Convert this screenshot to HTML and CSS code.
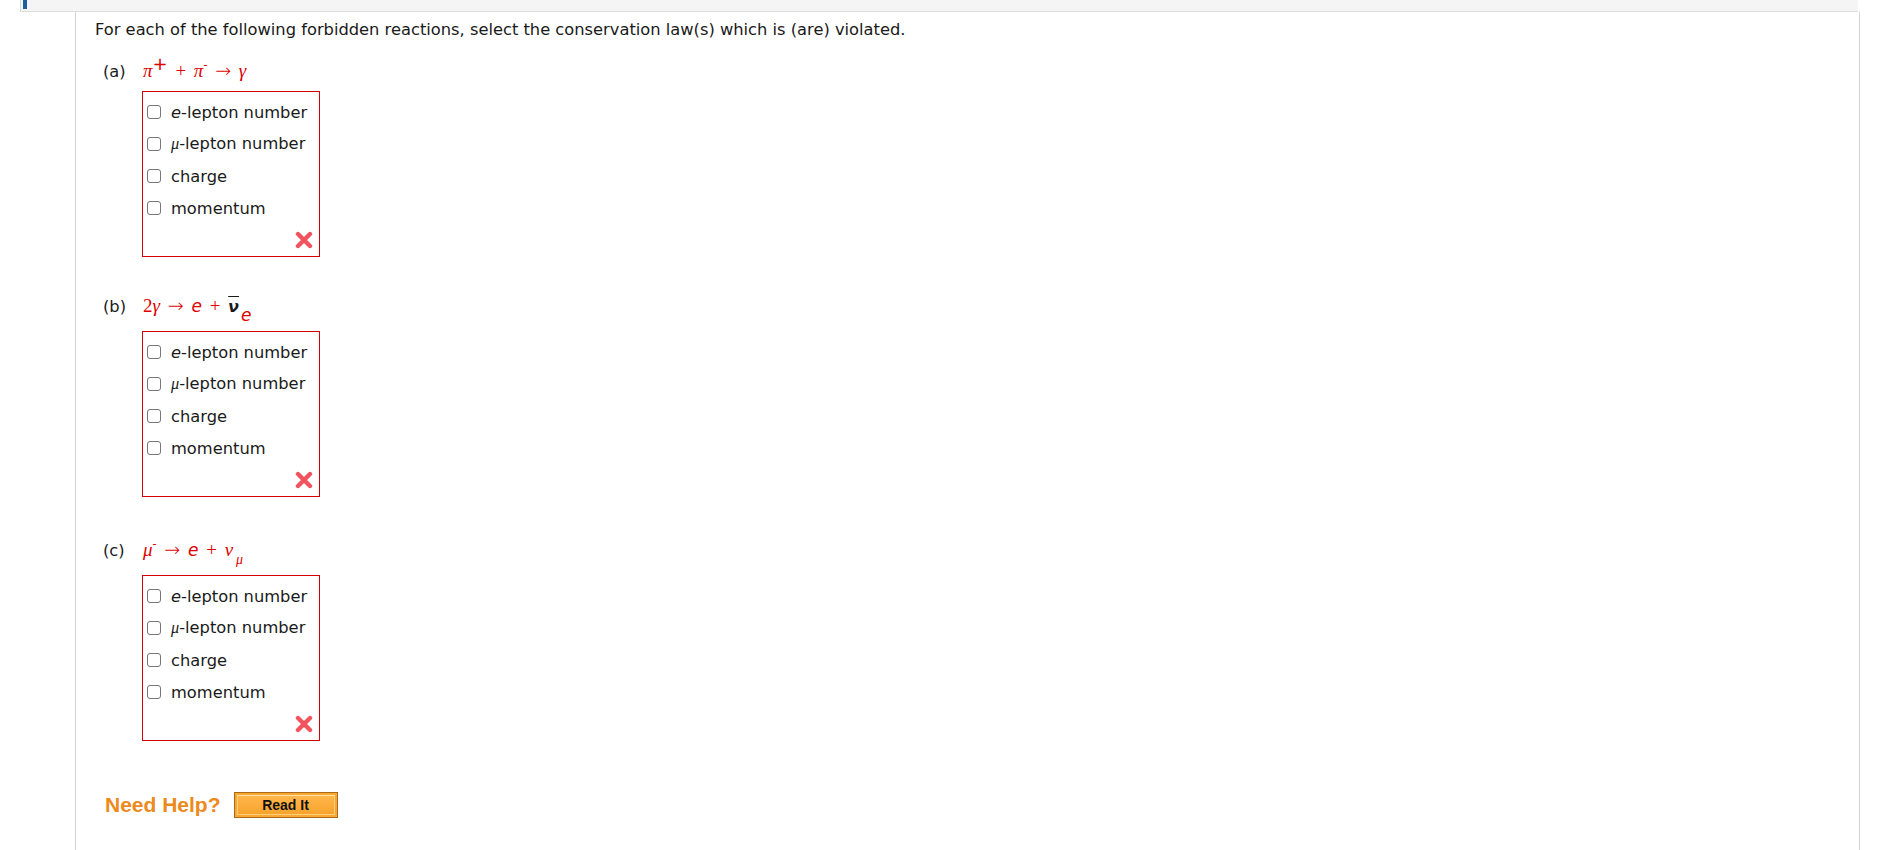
FILE: index.html
```html
<!DOCTYPE html>
<html lang="en">
<head>
    <meta charset="UTF-8">
    <title>Forbidden reactions</title>
    <link rel="stylesheet" href="styles.css">
</head>
<body>
    <div class="topbar"><span class="tab"></span></div>
    <div class="main">
        <p class="question">For each of the following forbidden reactions, select the conservation law(s) which is (are) violated.</p>

        <div class="part part-a">
            <div class="reaction">
                <span class="letter">(a)</span>
                <span class="formula"><i class="sym">&pi;</i><sup class="plus">+</sup> + <i class="sym">&pi;</i><sup class="minus">-</sup> <span class="arrow">&rarr;</span> <i class="sym">&gamma;</i></span>
            </div>
            <div class="choices">
                <label class="choice"><span class="box"></span><span><i>e</i>-lepton number</span></label>
                <label class="choice"><span class="box"></span><span><i class="sym">&mu;</i>-lepton number</span></label>
                <label class="choice"><span class="box"></span><span>charge</span></label>
                <label class="choice"><span class="box"></span><span>momentum</span></label>
                <div class="mark">
                    <svg width="18" height="18" viewBox="0 0 18 18"><path d="M3 3 L15 15 M15 3 L3 15" stroke="#f2545e" stroke-width="4.4" stroke-linecap="round"/></svg>
                </div>
            </div>
        </div>

        <div class="part part-b">
            <div class="reaction has-sub">
                <span class="letter">(b)</span>
                <span class="formula"><span class="num">2</span><i class="sym">&gamma;</i> <span class="arrow">&rarr;</span> <i class="e">e</i> + <span class="bar">&nu;</span><sub class="e">e</sub></span>
            </div>
            <div class="choices">
                <label class="choice"><span class="box"></span><span><i>e</i>-lepton number</span></label>
                <label class="choice"><span class="box"></span><span><i class="sym">&mu;</i>-lepton number</span></label>
                <label class="choice"><span class="box"></span><span>charge</span></label>
                <label class="choice"><span class="box"></span><span>momentum</span></label>
                <div class="mark">
                    <svg width="18" height="18" viewBox="0 0 18 18"><path d="M3 3 L15 15 M15 3 L3 15" stroke="#f2545e" stroke-width="4.4" stroke-linecap="round"/></svg>
                </div>
            </div>
        </div>

        <div class="part part-c">
            <div class="reaction has-sub">
                <span class="letter">(c)</span>
                <span class="formula"><i class="sym">&mu;</i><sup class="minus">-</sup> <span class="arrow">&rarr;</span> <i class="e">e</i> + <i class="sym">&nu;</i><sub class="sym mu">&mu;</sub></span>
            </div>
            <div class="choices">
                <label class="choice"><span class="box"></span><span><i>e</i>-lepton number</span></label>
                <label class="choice"><span class="box"></span><span><i class="sym">&mu;</i>-lepton number</span></label>
                <label class="choice"><span class="box"></span><span>charge</span></label>
                <label class="choice"><span class="box"></span><span>momentum</span></label>
                <div class="mark">
                    <svg width="18" height="18" viewBox="0 0 18 18"><path d="M3 3 L15 15 M15 3 L3 15" stroke="#f2545e" stroke-width="4.4" stroke-linecap="round"/></svg>
                </div>
            </div>
        </div>

        <div class="help">
            <span class="need">Need Help?</span>
            <span class="readit"><span>Read It</span></span>
        </div>
    </div>
</body>
</html>
```

FILE: styles.css
```css
body {
    margin: 0;
    background: #fff;
    font-family: "DejaVu Sans", Verdana, sans-serif;
    font-size: 16.3px;
    color: #1a1a1a;
    height: 850px;
    overflow: hidden;
}

.topbar {
    margin: 0 20px;
    height: 11px;
    background: #f5f5f5;
    border-left: 1px solid #dcdcdc;
    border-bottom: 1px solid #dcdcdc;
    position: relative;
}

.tab {
    position: absolute;
    left: 2px;
    top: 0;
    width: 4px;
    height: 9px;
    background: #1b5f9b;
}

.main {
    margin-left: 75px;
    width: 1764px;
    height: 850px;
    border-left: 1px solid #d4d4d4;
    border-right: 1px solid #d4d4d4;
    padding-left: 19px;
}

.question {
    margin: 0;
    padding-top: 6px;
    line-height: 24px;
}

.part-a {
    margin-top: 16px;
}

.part-b {
    margin-top: 36px;
}

.part-c {
    margin-top: 40px;
}

.reaction {
    padding-left: 8px;
    line-height: 24px;
    display: flex;
    align-items: baseline;
}

.has-sub {
    margin-bottom: 12px;
}

.letter {
    width: 40px;
}

.formula {
    color: #e00000;
    font-family: "Liberation Serif", "DejaVu Serif", serif;
    font-size: 19px;
    white-space: pre;
    word-spacing: 3px;
}

.arrow {
    font-family: "DejaVu Sans", sans-serif;
    font-size: 19px;
    font-weight: 300;
}

.sym {
    font-family: "Liberation Serif", "DejaVu Serif", serif;
    font-style: italic;
}

.e {
    font-family: "DejaVu Sans", sans-serif;
    font-style: italic;
    font-size: 17px;
}

.num {
    font-family: "Liberation Serif", serif;
}

.plus {
    font-family: "DejaVu Sans", sans-serif;
    font-size: 18px;
    vertical-align: 7px;
    line-height: 0;
}

.minus {
    font-size: 12px;
    vertical-align: 8px;
    line-height: 0;
}

.bar {
    color: #1a1a1a;
    font-style: italic;
    font-weight: bold;
    font-family: "DejaVu Sans", sans-serif;
    font-size: 16px;
    text-decoration: overline;
}

sub.e {
    vertical-align: -9px;
    line-height: 0;
    margin-left: 2px;
}

sub.mu {
    font-size: 14px;
    vertical-align: -8px;
    line-height: 0;
    margin-left: 3px;
}

.choices {
    margin-left: 47px;
    margin-top: 7px;
    width: 172px;
    border: 1px solid #d40000;
    padding: 4px 0 7px 4px;
    box-sizing: content-box;
}

.has-sub + .choices {
    margin-top: 0;
}

.choice {
    display: flex;
    align-items: center;
    gap: 10px;
    height: 32px;
    white-space: nowrap;
}

.choice i {
    font-style: italic;
}

.box {
    width: 12px;
    height: 12px;
    border: 1.5px solid #767676;
    border-radius: 3px;
    flex: none;
}

.mark {
    display: flex;
    justify-content: flex-end;
    padding: 7px 6px 0 0;
}

.mark svg {
    display: block;
}

.help {
    display: flex;
    align-items: center;
    gap: 13px;
    margin-top: 51px;
    padding-left: 10px;
}

.need {
    font-family: "Liberation Sans", Arial, sans-serif;
    font-weight: bold;
    font-size: 21px;
    color: #ec8a1c;
}

.readit {
    display: flex;
    width: 104px;
    height: 26px;
    box-sizing: border-box;
    border: 1px solid #a96916;
    background: #f9a833;
    padding: 2px;
}

.readit span {
    flex: 1;
    border: 1px solid #ffcf7a;
    border-top-color: #ffe4a8;
    background: linear-gradient(#ffb64a, #f7a42e);
    font-family: "Liberation Sans", Arial, sans-serif;
    font-weight: bold;
    font-size: 14px;
    color: #111;
    text-align: center;
    line-height: 18px;
}
```
